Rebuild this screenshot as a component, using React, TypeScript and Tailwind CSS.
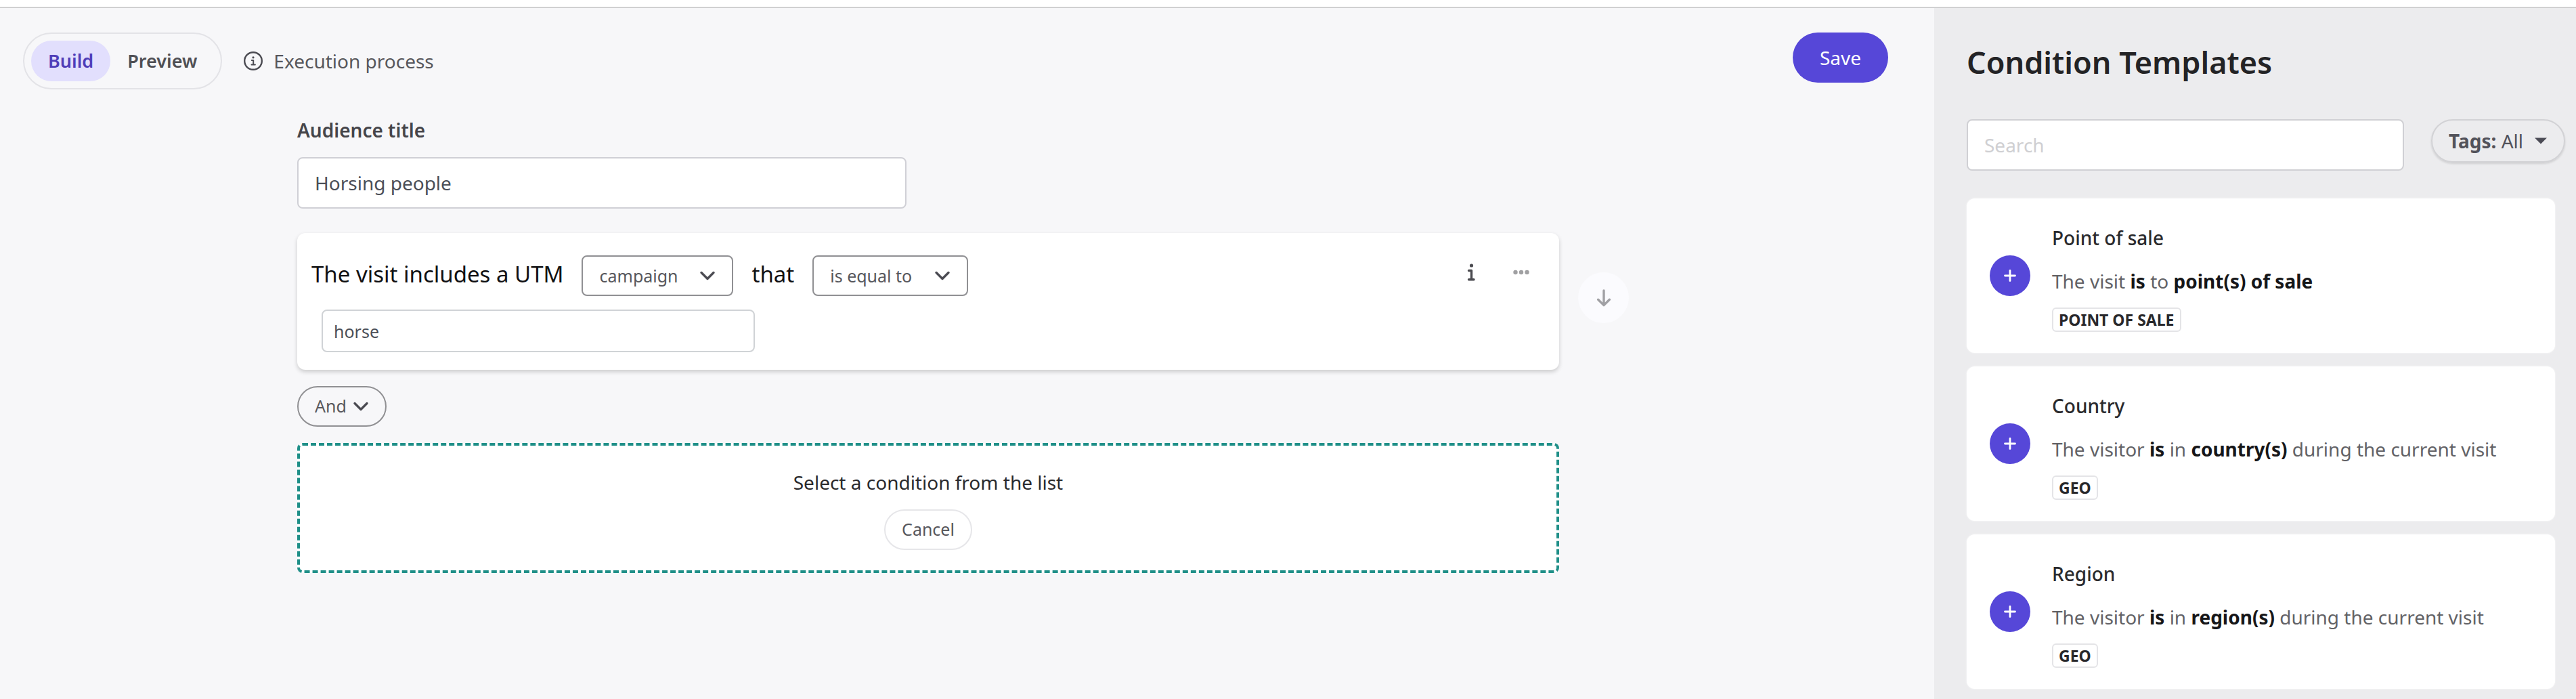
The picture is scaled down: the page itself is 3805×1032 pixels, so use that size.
import { ReactNode } from "react";

function Chevron({ className }: { className?: string }) {
  return (
    <svg
      viewBox="0 0 24 16"
      className={`h-4 w-6 ${className ?? ""}`}
      fill="none"
      stroke="#4b4b52"
      strokeWidth="3.4"
      strokeLinecap="round"
      strokeLinejoin="round"
      aria-hidden="true"
    >
      <path d="M3 3.5l9 9 9-9" />
    </svg>
  );
}

function InfoGlyph() {
  return (
    <svg viewBox="0 0 12 28" className="h-7 w-3" aria-hidden="true">
      <circle cx="6.5" cy="4" r="2.6" fill="#4b4b50" />
      <path
        d="M2.5 11.5h4v13M2.5 24.8h7.5"
        fill="none"
        stroke="#4b4b50"
        strokeWidth="3.4"
        strokeLinecap="round"
        strokeLinejoin="round"
      />
    </svg>
  );
}

function InfoCircle() {
  return (
    <svg viewBox="0 0 28 28" className="h-7 w-7" fill="none" stroke="#4b4b52" aria-hidden="true">
      <circle cx="14" cy="14" r="12.8" strokeWidth="2.4" />
      <circle cx="14" cy="8.8" r="1.6" fill="#4b4b52" stroke="none" />
      <path d="M11.8 12.9h2.4v6.3M11.5 19.4h5.4" strokeWidth="2" strokeLinecap="round" strokeLinejoin="round" />
    </svg>
  );
}

type DropdownProps = {
  label: string;
  options: string[];
  className: string;
};

function Dropdown({ label, options, className }: DropdownProps) {
  return (
    <div className="relative shrink-0">
      <select
        aria-label={label}
        className={`h-15 appearance-none border-2 border-[#909093] pl-6 text-[25px] text-[#57575c] ${className}`}
      >
        {options.map((option) => (
          <option key={option}>{option}</option>
        ))}
      </select>
      <Chevron className="pointer-events-none absolute top-1/2 right-[26px] -translate-y-1/2" />
    </div>
  );
}

const templates: { title: string; tag: string; text: ReactNode }[] = [
  {
    title: "Point of sale",
    tag: "POINT OF SALE",
    text: (
      <>
        The visit <b className="text-[#161618]">is</b> to <b className="text-[#161618]">point(s) of sale</b>
      </>
    ),
  },
  {
    title: "Country",
    tag: "GEO",
    text: (
      <>
        The visitor <b className="text-[#161618]">is</b> in <b className="text-[#161618]">country(s)</b> during the
        current visit
      </>
    ),
  },
  {
    title: "Region",
    tag: "GEO",
    text: (
      <>
        The visitor <b className="text-[#161618]">is</b> in <b className="text-[#161618]">region(s)</b> during the
        current visit
      </>
    ),
  },
];

function Toolbar() {
  return (
    <div className="mr-[34px] flex items-start justify-between">
      <div className="flex items-center gap-8">
        <div className="flex rounded-full border-2 border-[#e3e3e7] p-2.5">
          <button className="h-15 rounded-full bg-[#e2dffd] px-[25px] text-[27px] font-semibold text-[#4f3db8]">
            Build
          </button>
          <button className="h-15 rounded-full px-[25px] text-[27px] font-semibold text-[#4f4f54]">Preview</button>
        </div>
        <a href="#execution" className="flex items-center gap-4 text-[28px] text-[#57575c]">
          <InfoCircle />
          Execution process
        </a>
      </div>
      <button className="h-[74px] rounded-full bg-[#5647d8] px-10 text-[28px] text-white">Save</button>
    </div>
  );
}

function Condition() {
  return (
    <div className="mt-9 flex items-start">
      <section className="flex-1 rounded-xl bg-white pt-[33px] pb-[26px] pl-[21px] shadow-[0_3px_6px_rgba(0,0,0,0.18)]">
        <div className="flex items-start gap-[27px] text-[33px] leading-[56px] text-[#111113]">
          <span>The visit includes a UTM</span>
          <Dropdown
            label="UTM parameter"
            options={["campaign", "source", "medium"]}
            className="w-[224px] rounded-lg"
          />
          <span>that</span>
          <Dropdown label="Operator" options={["is equal to", "contains"]} className="w-[230px] rounded-lg" />
          <div className="mr-9 ml-auto flex h-[50px] items-center gap-[34px]">
            <button aria-label="Information" className="flex size-10 items-center justify-center">
              <InfoGlyph />
            </button>
            <button aria-label="More actions" className="flex size-10 items-center justify-center">
              <svg viewBox="0 0 26 8" className="h-2 w-[26px]" fill="#a0a0a2" aria-hidden="true">
                <circle cx="4.5" cy="4" r="3.2" />
                <circle cx="13" cy="4" r="3.2" />
                <circle cx="21.5" cy="4" r="3.2" />
              </svg>
            </button>
          </div>
        </div>
        <input
          aria-label="Value"
          defaultValue="horse"
          className="mt-5 ml-[15px] block h-[63px] w-[640px] rounded-lg border-2 border-[#d0d3d6] px-4 text-[25px] text-[#4b4f58]"
        />
      </section>
      <button
        aria-label="Move down"
        className="mt-[58px] mr-3 ml-7 flex size-[75px] items-center justify-center rounded-full bg-[#fbfbfe]"
      >
        <svg
          viewBox="0 0 24 28"
          className="h-7 w-6"
          fill="none"
          stroke="#a0a0a4"
          strokeWidth="3.4"
          strokeLinecap="round"
          strokeLinejoin="round"
          aria-hidden="true"
        >
          <path d="M12 3v21.6M3.6 16.2l8.4 8.4 8.4-8.4" />
        </svg>
      </button>
    </div>
  );
}

function Builder() {
  return (
    <main className="min-w-0 flex-1 px-[34px] pt-9">
      <Toolbar />
      <div className="mx-auto mt-10 w-full max-w-[1979px]">
        <label htmlFor="audience-title" className="block text-[28px] leading-10 font-semibold text-[#45454a]">
          Audience title
        </label>
        <input
          id="audience-title"
          defaultValue="Horsing people"
          className="mt-5 block h-19 w-[900px] rounded-lg border-2 border-[#d0d0d6] bg-white px-6 text-[28px] text-[#4b4f58]"
        />
        <Condition />
        <div className="mt-6 flex">
          <Dropdown label="Combine with" options={["And", "Or"]} className="w-[132px] rounded-full" />
        </div>
        <section className="mt-6 mr-[115px] flex flex-col items-center rounded-lg border-4 border-dashed border-[#1f8f88] bg-white pt-[34px] pb-[30px]">
          <p className="text-[28px] leading-10 text-[#2a2a2d]">Select a condition from the list</p>
          <button className="mt-5 h-15 rounded-full border-2 border-[#e6e6e9] px-6 text-[25px] text-[#57575c]">
            Cancel
          </button>
        </section>
      </div>
    </main>
  );
}

function Sidebar() {
  return (
    <aside className="w-[948px] shrink-0 bg-[#ececee] pt-[50px] pr-4 pl-12">
      <h1 className="text-[45px] leading-15 font-semibold text-[#232325]">Condition Templates</h1>
      <div className="mt-[54px] flex items-start gap-10">
        <input
          type="search"
          aria-label="Search"
          placeholder="Search"
          className="h-19 min-w-0 flex-1 rounded-lg border-2 border-[#d0d0d4] bg-white px-6 text-[28px] placeholder:text-[#cfcfd2]"
        />
        <button
          aria-haspopup="menu"
          className="flex h-16 items-center rounded-full border-2 border-[#d2d2d5] px-6 text-[28px] text-[#52525a] shadow-[0_2px_3px_rgba(0,0,0,0.12)]"
        >
          <span>
            <b>Tags:</b> All
          </span>
          <svg viewBox="0 0 20 10" className="ml-4 h-2.5 w-5" fill="#4b4b55" aria-hidden="true">
            <path d="M1 .5h18l-9 9z" />
          </svg>
        </button>
      </div>
      <ul className="mt-[41px] mr-[15px] flex flex-col gap-5">
        {templates.map(({ title, tag, text }) => (
          <li
            key={title}
            className="flex items-center gap-8 rounded-xl bg-white pt-[39px] pb-[31px] pl-[34px] shadow-[0_0_3px_rgba(255,255,255,0.8)]"
          >
            <button
              aria-label={`Add ${title}`}
              className="-mt-2 flex size-15 shrink-0 items-center justify-center rounded-full bg-[#5647d8]"
            >
              <svg
                viewBox="0 0 20 20"
                className="size-5"
                fill="none"
                stroke="white"
                strokeWidth="2.8"
                strokeLinecap="round"
                aria-hidden="true"
              >
                <path d="M10 2.5v15M2.5 10h15" />
              </svg>
            </button>
            <div className="text-[28px] leading-[38px]">
              <h2 className="font-medium text-[#2a2a2d]">{title}</h2>
              <p className="mt-[26px] text-[#626266]">{text}</p>
              <span className="mt-5 flex h-9 w-fit items-center rounded-md border-2 border-[#e4e4e7] px-2 text-[23px] font-bold text-[#28282b]">
                {tag}
              </span>
            </div>
          </li>
        ))}
      </ul>
    </aside>
  );
}

export default function App() {
  return (
    <div className="flex min-h-screen flex-col bg-[#f7f7f9] font-['Noto_Sans','Open_Sans',sans-serif]">
      <header className="h-3 border-b-2 border-[#d0d0d1] bg-white" />
      <div className="flex flex-1">
        <Builder />
        <Sidebar />
      </div>
    </div>
  );
}
